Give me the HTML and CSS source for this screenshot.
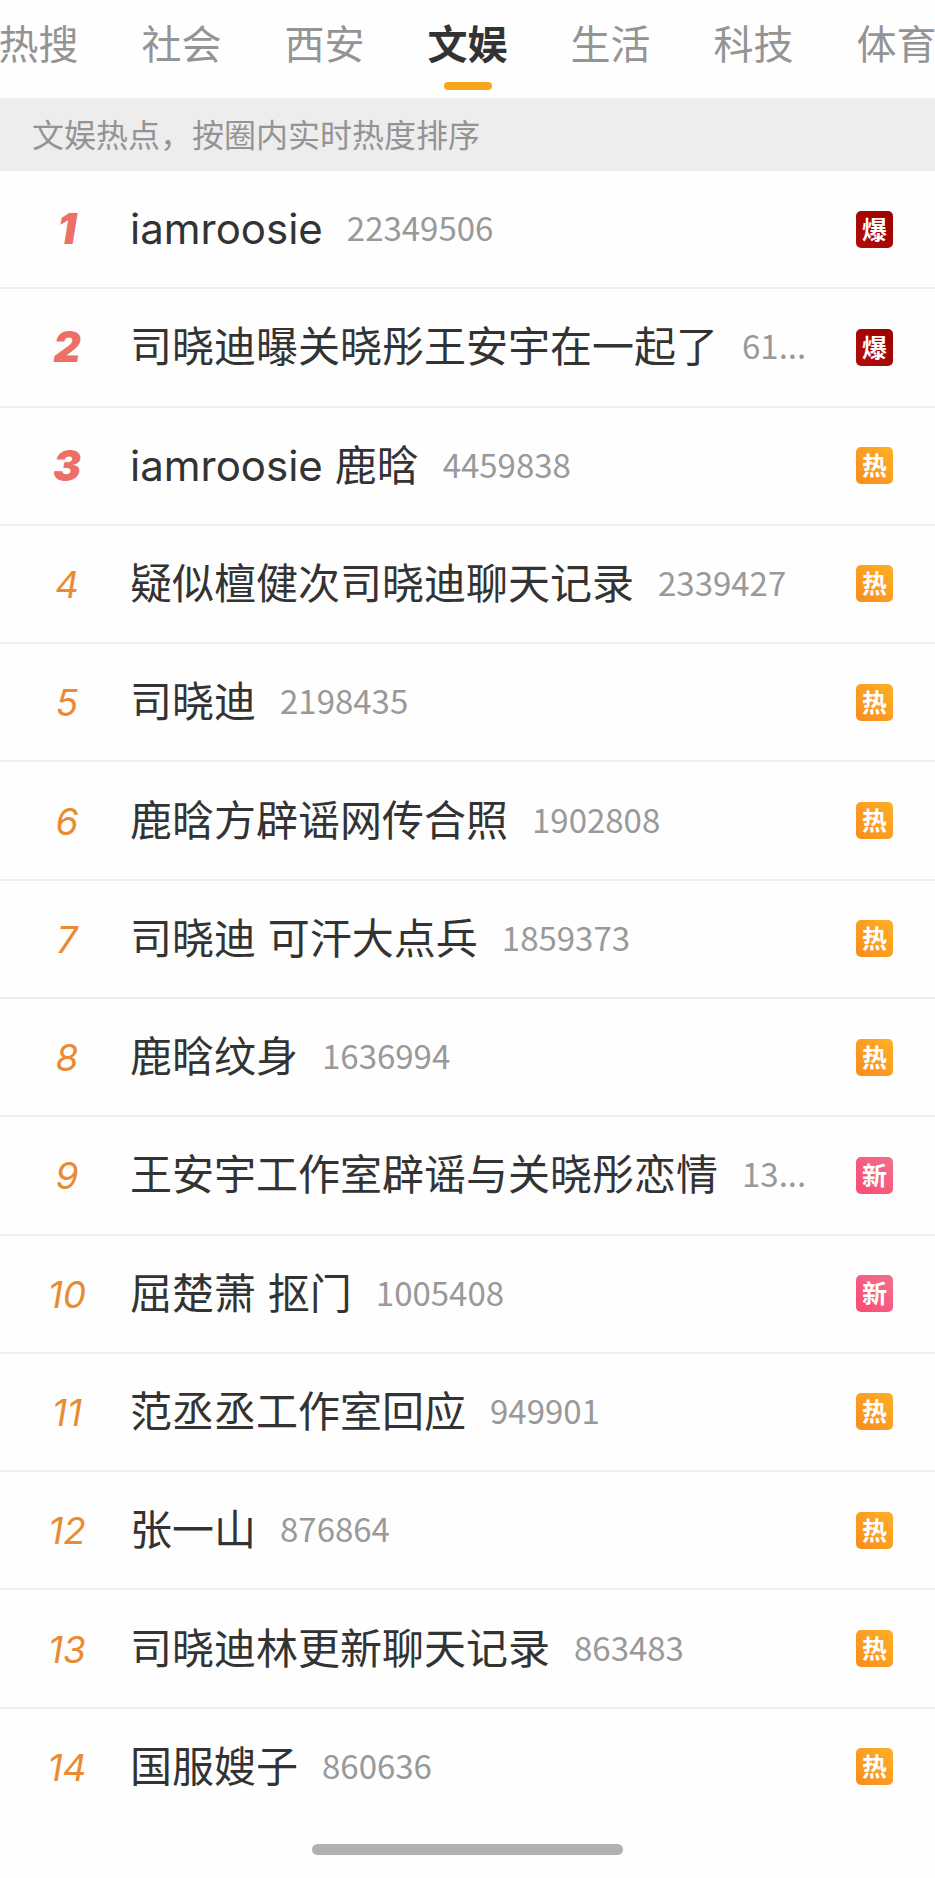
FILE: index.html
```html
<!DOCTYPE html>
<html lang="zh-CN">
<head>
    <meta charset="UTF-8">
    <meta name="viewport" content="width=device-width, initial-scale=1.0">
    <title>文娱</title>
    <link rel="stylesheet" href="styles.css">
</head>
<body>

    <!-- Channel tabs -->
    <nav class="tabs">
        <a class="tab" href="#">热搜</a>
        <a class="tab" href="#">社会</a>
        <a class="tab" href="#">西安</a>
        <a class="tab active" href="#">文娱</a>
        <a class="tab" href="#">生活</a>
        <a class="tab" href="#">科技</a>
        <a class="tab" href="#">体育</a>
    </nav>

    <p class="hint">文娱热点，按圈内实时热度排序</p>

    <!-- Hot list -->
    <main class="list">
        <a class="row" href="#">
            <span class="rank top">1</span>
            <span class="title">iamroosie</span>
            <span class="count">22349506</span>
            <span class="badge boom">爆</span>
        </a>
        <a class="row" href="#">
            <span class="rank top">2</span>
            <span class="title">司晓迪曝关晓彤王安宇在一起了</span>
            <span class="count">61...</span>
            <span class="badge boom">爆</span>
        </a>
        <a class="row" href="#">
            <span class="rank top">3</span>
            <span class="title">iamroosie 鹿晗</span>
            <span class="count">4459838</span>
            <span class="badge hot">热</span>
        </a>
        <a class="row" href="#">
            <span class="rank">4</span>
            <span class="title">疑似檀健次司晓迪聊天记录</span>
            <span class="count">2339427</span>
            <span class="badge hot">热</span>
        </a>
        <a class="row" href="#">
            <span class="rank">5</span>
            <span class="title">司晓迪</span>
            <span class="count">2198435</span>
            <span class="badge hot">热</span>
        </a>
        <a class="row" href="#">
            <span class="rank">6</span>
            <span class="title">鹿晗方辟谣网传合照</span>
            <span class="count">1902808</span>
            <span class="badge hot">热</span>
        </a>
        <a class="row" href="#">
            <span class="rank">7</span>
            <span class="title">司晓迪 可汗大点兵</span>
            <span class="count">1859373</span>
            <span class="badge hot">热</span>
        </a>
        <a class="row" href="#">
            <span class="rank">8</span>
            <span class="title">鹿晗纹身</span>
            <span class="count">1636994</span>
            <span class="badge hot">热</span>
        </a>
        <a class="row" href="#">
            <span class="rank">9</span>
            <span class="title">王安宇工作室辟谣与关晓彤恋情</span>
            <span class="count">13...</span>
            <span class="badge new">新</span>
        </a>
        <a class="row" href="#">
            <span class="rank">10</span>
            <span class="title">屈楚萧 抠门</span>
            <span class="count">1005408</span>
            <span class="badge new">新</span>
        </a>
        <a class="row" href="#">
            <span class="rank">11</span>
            <span class="title">范丞丞工作室回应</span>
            <span class="count">949901</span>
            <span class="badge hot">热</span>
        </a>
        <a class="row" href="#">
            <span class="rank">12</span>
            <span class="title">张一山</span>
            <span class="count">876864</span>
            <span class="badge hot">热</span>
        </a>
        <a class="row" href="#">
            <span class="rank">13</span>
            <span class="title">司晓迪林更新聊天记录</span>
            <span class="count">863483</span>
            <span class="badge hot">热</span>
        </a>
        <a class="row" href="#">
            <span class="rank">14</span>
            <span class="title">国服嫂子</span>
            <span class="count">860636</span>
            <span class="badge hot">热</span>
        </a>
    </main>

    <!-- Home indicator -->
    <footer class="home"><div class="home-bar"></div></footer>

</body>
</html>
```

FILE: styles.css
```css
* {
    box-sizing: border-box;
}

body {
    margin: 0;
    min-height: 100vh;
    display: flex;
    flex-direction: column;
    background: #fefefe;
    color: #333;
    font-family: "Noto Sans CJK SC", sans-serif;
}

a {
    color: inherit;
    text-decoration: none;
}

.tabs {
    display: flex;
    justify-content: center;
    gap: 63px;
    height: 98px;
    overflow: hidden;
}

.tab {
    flex: none;
    display: flex;
    flex-direction: column;
    align-items: center;
    padding-top: 12px;
    font-size: 40px;
    line-height: 60px;
    color: #949494;
}

.tab.active {
    color: #333;
    font-weight: bold;
}

/* Orange underline of the current tab */
.tab.active::after {
    content: "";
    width: 48px;
    height: 8px;
    margin-top: 10px;
    border-radius: 4px;
    background: #f7a519;
}

.hint {
    margin: 0;
    padding: 11px 32px 14px;
    background: #ededed;
    color: #949494;
    font-size: 32px;
    line-height: 48px;
}

.list {
    flex: 1;
    display: flex;
    flex-direction: column;
}

.row {
    flex: 1;
    display: flex;
    align-items: center;
    padding: 0 42px 0 32px;
    border-bottom: 2px solid #eee;
    white-space: nowrap;
}

.row:last-child {
    border-bottom-color: transparent;
}

.rank {
    flex: none;
    width: 70px;
    margin-right: 28px;
    padding-top: 2px;
    text-align: center;
    font-family: Inter, sans-serif;
    font-size: 37px;
    font-style: italic;
    line-height: 60px;
    color: #e98b32;
}

.rank.top {
    padding-top: 0;
    font-size: 42px;
    font-weight: 900;
    color: #ec7066;
}

.title {
    font-family: Inter, "Noto Sans CJK SC", sans-serif;
    font-size: 42px;
    line-height: 60px;
}

.count {
    margin-left: 24px;
    padding-bottom: 4px;
    font-size: 33px;
    line-height: 60px;
    color: #999;
}

.badge {
    flex: none;
    width: 37px;
    height: 37px;
    margin-left: auto;
    border-radius: 5px;
    text-align: center;
    font-size: 25px;
    font-weight: bold;
    line-height: 35px;
    color: #fff;
}

.boom {
    background: linear-gradient(to top right, #b30d0d, #9c0000);
}

.hot {
    background: linear-gradient(to top right, #f88c1c, #feb027);
}

.new {
    background: linear-gradient(to top right, #fa4a74, #f0708c);
}

.home {
    display: flex;
    justify-content: center;
    padding: 17px 0 23px;
}

.home-bar {
    width: calc(100% / 3);
    height: 11px;
    border-radius: 6px;
    background: #b1b1b1;
}
```
